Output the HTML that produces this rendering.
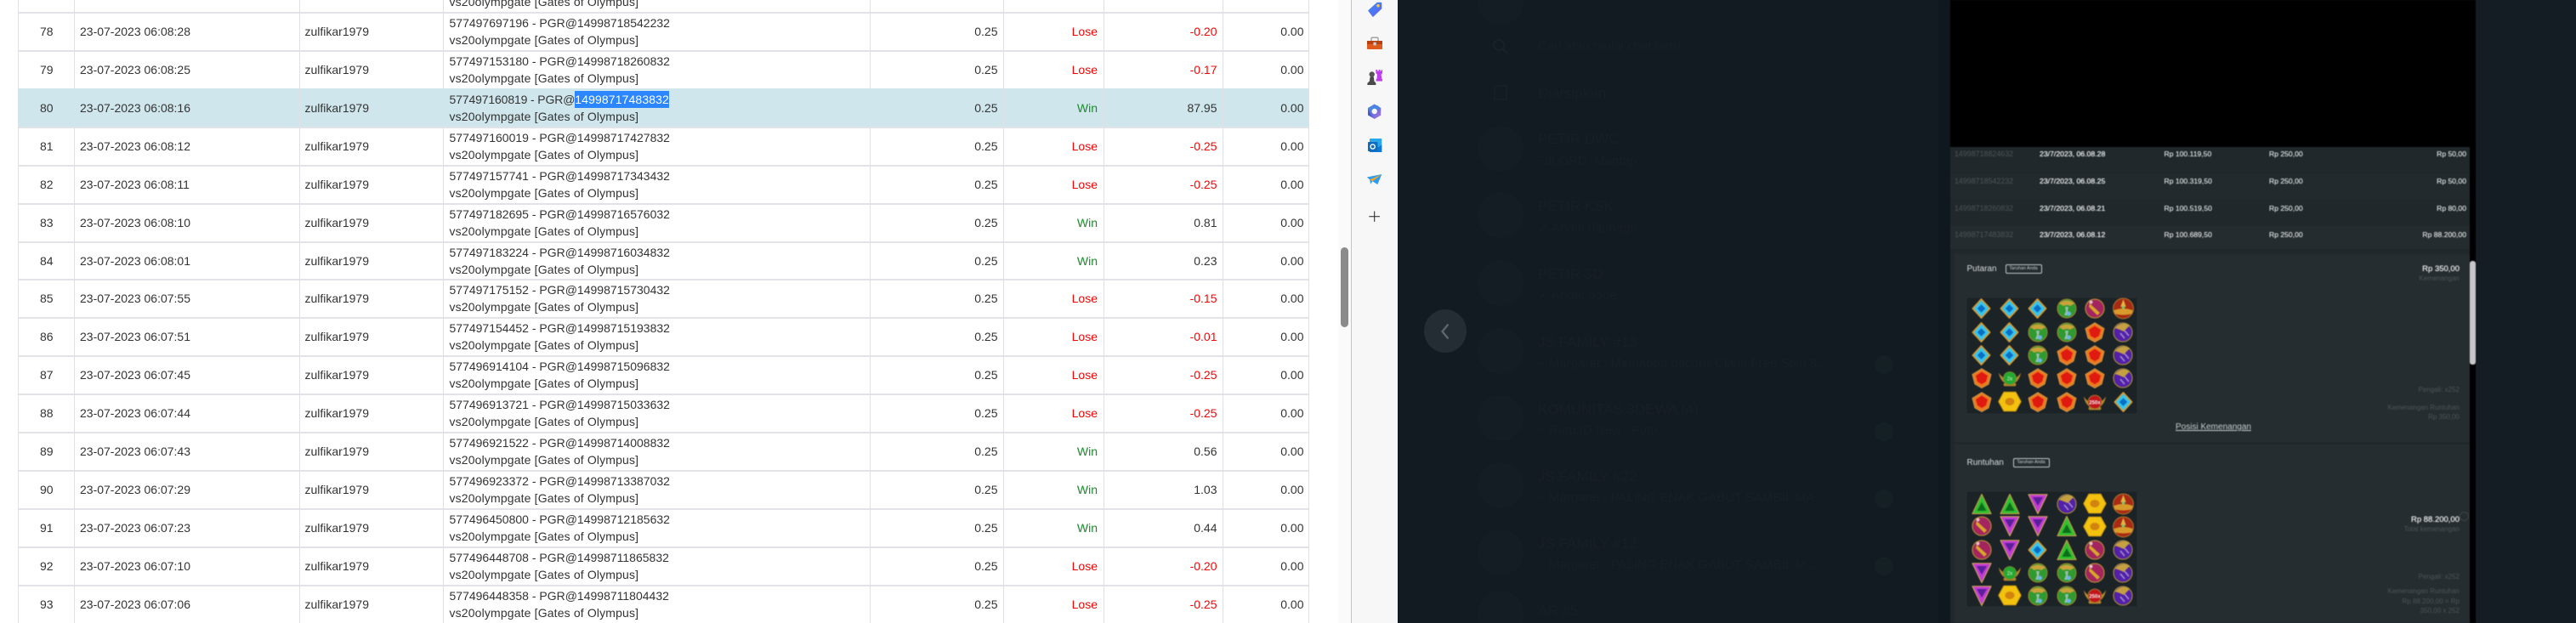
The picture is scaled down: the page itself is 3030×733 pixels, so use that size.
<!DOCTYPE html>
<html><head><meta charset="utf-8"><title>Report</title>
<style>
html,body{margin:0;padding:0;width:3030px;height:733px;overflow:hidden;background:#fff}
body{position:relative;font-family:"Liberation Sans",sans-serif}
.a{position:absolute}
.tb{position:absolute;left:0;top:0;width:1574px;height:733px;background:#fff;color:#333;font-size:14px;line-height:20px;overflow:hidden}
.r{position:absolute;left:21px;width:1519px;height:45px;border-top:2px solid #e1e3e8;box-sizing:border-box}
.r.s{background:#cfe6ec;border-top-color:#cfe6ec}
.r span{position:absolute;white-space:nowrap}
.n{left:26px;top:11px}.d{left:73px;top:11px}.u{left:337.5px;top:11px}
.t1{left:507.5px;top:1px}.t2{left:507.5px;top:21px;letter-spacing:.15px}
.b,.w,.p,.z{top:11px;text-align:right}
.b{right:366.5px}.w{right:249px}.p{right:108.5px}.z{right:6.5px}
.L{color:#f00}.W{color:#1c8a2c}
.v{position:absolute;top:0;width:1px;height:733px;background:#e0e1e6;z-index:3}
.sel{background:#2b86ff;color:#fff;display:inline-block;height:20px;letter-spacing:.12px}
.dk{position:absolute;left:1644px;top:0;width:1386px;height:733px;background:#131b22;overflow:hidden}
.f{position:absolute;white-space:nowrap;color:#171f26;font-size:17px;line-height:22px}
.f2{font-size:15px;color:#161f26}
.av{position:absolute;left:94px;width:54px;height:54px;border-radius:50%;background:#151d24}
.pn{position:absolute;left:2294px;top:0;width:618px;height:733px;background:#20282c;overflow:hidden;filter:blur(.5px)}
.pn span,.pn u{position:absolute;white-space:nowrap;line-height:12px}
.row{position:absolute;left:0;width:611px;height:29px;background:#222a2e}
.id{left:5px;color:#4d5457;font-size:8.9px}
.dt{left:105px;color:#eef0f0;font-size:8.7px;text-shadow:0 0 .6px #eef0f0}
.bl{left:251.5px;color:#d8dcdc;font-size:8.6px;text-shadow:0 0 .5px #d8dcdc}
.bt{left:375px;color:#d8dcdc;font-size:8.6px;text-shadow:0 0 .5px #d8dcdc}
.wn{right:11px;color:#d8dcdc;font-size:8.6px;text-shadow:0 0 .5px #d8dcdc}
.card{position:absolute;left:5px;width:606px;background:#262d31}
.h{color:#d8dcdc;font-size:10px;left:14.5px}
.bdg{position:absolute;width:43px;height:11px;border:1px solid #c6caca;border-radius:2px;box-sizing:border-box;color:#cfd3d3;font-size:5.4px;line-height:9px;text-align:center}
.gr{right:18px;color:#4c5356;font-size:8px;text-align:right}
.gw{right:18px;color:#e6e8e8;font-size:9.5px;text-align:right;text-shadow:0 0 .6px #e6e8e8}
.sv{filter:blur(.35px)}
</style></head><body>

<div class="tb">
<span class="a" style="left:528.5px;top:-8px;white-space:nowrap;letter-spacing:.15px">vs20olympgate [Gates of Olympus]</span>
<div class="v" style="left:21px"></div><div class="v" style="left:87px"></div><div class="v" style="left:352px"></div><div class="v" style="left:521px"></div><div class="v" style="left:1023px"></div><div class="v" style="left:1180px"></div><div class="v" style="left:1298px"></div><div class="v" style="left:1438px"></div><div class="v" style="left:1539px"></div>

<div class="r" style="top:14px"><span class="n">78</span><span class="d">23-07-2023 06:08:28</span><span class="u">zulfikar1979</span><span class="t1">577497697196 - PGR@14998718542232</span><span class="t2">vs20olympgate [Gates of Olympus]</span><span class="b">0.25</span><span class="w L">Lose</span><span class="p L">-0.20</span><span class="z">0.00</span></div>
<div class="r" style="top:59px"><span class="n">79</span><span class="d">23-07-2023 06:08:25</span><span class="u">zulfikar1979</span><span class="t1">577497153180 - PGR@14998718260832</span><span class="t2">vs20olympgate [Gates of Olympus]</span><span class="b">0.25</span><span class="w L">Lose</span><span class="p L">-0.17</span><span class="z">0.00</span></div>
<div class="r s" style="top:104px"><span class="n">80</span><span class="d">23-07-2023 06:08:16</span><span class="u">zulfikar1979</span><span class="t1" style="letter-spacing:-.14px">577497160819 - PGR@<b class="sel" style="font-weight:normal">14998717483832</b></span><span class="t2">vs20olympgate [Gates of Olympus]</span><span class="b">0.25</span><span class="w W">Win</span><span class="p">87.95</span><span class="z">0.00</span></div>
<div class="r" style="top:149px"><span class="n">81</span><span class="d">23-07-2023 06:08:12</span><span class="u">zulfikar1979</span><span class="t1">577497160019 - PGR@14998717427832</span><span class="t2">vs20olympgate [Gates of Olympus]</span><span class="b">0.25</span><span class="w L">Lose</span><span class="p L">-0.25</span><span class="z">0.00</span></div>
<div class="r" style="top:194px"><span class="n">82</span><span class="d">23-07-2023 06:08:11</span><span class="u">zulfikar1979</span><span class="t1">577497157741 - PGR@14998717343432</span><span class="t2">vs20olympgate [Gates of Olympus]</span><span class="b">0.25</span><span class="w L">Lose</span><span class="p L">-0.25</span><span class="z">0.00</span></div>
<div class="r" style="top:239px"><span class="n">83</span><span class="d">23-07-2023 06:08:10</span><span class="u">zulfikar1979</span><span class="t1">577497182695 - PGR@14998716576032</span><span class="t2">vs20olympgate [Gates of Olympus]</span><span class="b">0.25</span><span class="w W">Win</span><span class="p">0.81</span><span class="z">0.00</span></div>
<div class="r" style="top:284px"><span class="n">84</span><span class="d">23-07-2023 06:08:01</span><span class="u">zulfikar1979</span><span class="t1">577497183224 - PGR@14998716034832</span><span class="t2">vs20olympgate [Gates of Olympus]</span><span class="b">0.25</span><span class="w W">Win</span><span class="p">0.23</span><span class="z">0.00</span></div>
<div class="r" style="top:328px"><span class="n">85</span><span class="d">23-07-2023 06:07:55</span><span class="u">zulfikar1979</span><span class="t1">577497175152 - PGR@14998715730432</span><span class="t2">vs20olympgate [Gates of Olympus]</span><span class="b">0.25</span><span class="w L">Lose</span><span class="p L">-0.15</span><span class="z">0.00</span></div>
<div class="r" style="top:373px"><span class="n">86</span><span class="d">23-07-2023 06:07:51</span><span class="u">zulfikar1979</span><span class="t1">577497154452 - PGR@14998715193832</span><span class="t2">vs20olympgate [Gates of Olympus]</span><span class="b">0.25</span><span class="w L">Lose</span><span class="p L">-0.01</span><span class="z">0.00</span></div>
<div class="r" style="top:418px"><span class="n">87</span><span class="d">23-07-2023 06:07:45</span><span class="u">zulfikar1979</span><span class="t1">577496914104 - PGR@14998715096832</span><span class="t2">vs20olympgate [Gates of Olympus]</span><span class="b">0.25</span><span class="w L">Lose</span><span class="p L">-0.25</span><span class="z">0.00</span></div>
<div class="r" style="top:463px"><span class="n">88</span><span class="d">23-07-2023 06:07:44</span><span class="u">zulfikar1979</span><span class="t1">577496913721 - PGR@14998715033632</span><span class="t2">vs20olympgate [Gates of Olympus]</span><span class="b">0.25</span><span class="w L">Lose</span><span class="p L">-0.25</span><span class="z">0.00</span></div>
<div class="r" style="top:508px"><span class="n">89</span><span class="d">23-07-2023 06:07:43</span><span class="u">zulfikar1979</span><span class="t1">577496921522 - PGR@14998714008832</span><span class="t2">vs20olympgate [Gates of Olympus]</span><span class="b">0.25</span><span class="w W">Win</span><span class="p">0.56</span><span class="z">0.00</span></div>
<div class="r" style="top:553px"><span class="n">90</span><span class="d">23-07-2023 06:07:29</span><span class="u">zulfikar1979</span><span class="t1">577496923372 - PGR@14998713387032</span><span class="t2">vs20olympgate [Gates of Olympus]</span><span class="b">0.25</span><span class="w W">Win</span><span class="p">1.03</span><span class="z">0.00</span></div>
<div class="r" style="top:598px"><span class="n">91</span><span class="d">23-07-2023 06:07:23</span><span class="u">zulfikar1979</span><span class="t1">577496450800 - PGR@14998712185632</span><span class="t2">vs20olympgate [Gates of Olympus]</span><span class="b">0.25</span><span class="w W">Win</span><span class="p">0.44</span><span class="z">0.00</span></div>
<div class="r" style="top:643px"><span class="n">92</span><span class="d">23-07-2023 06:07:10</span><span class="u">zulfikar1979</span><span class="t1">577496448708 - PGR@14998711865832</span><span class="t2">vs20olympgate [Gates of Olympus]</span><span class="b">0.25</span><span class="w L">Lose</span><span class="p L">-0.20</span><span class="z">0.00</span></div>
<div class="r" style="top:688px"><span class="n">93</span><span class="d">23-07-2023 06:07:06</span><span class="u">zulfikar1979</span><span class="t1">577496448358 - PGR@14998711804432</span><span class="t2">vs20olympgate [Gates of Olympus]</span><span class="b">0.25</span><span class="w L">Lose</span><span class="p L">-0.25</span><span class="z">0.00</span></div>
</div>

<!-- page scrollbar -->
<div class="a" style="left:1574px;top:0;width:15px;height:733px;background:#fafafa"></div>
<div class="a" style="left:1589px;top:0;width:1px;height:733px;background:#c4c4c4"></div>
<div class="a" style="left:1577px;top:291px;width:9px;height:94px;background:#8b8b8b;border-radius:5px"></div>

<!-- sidebar -->
<div class="a" style="left:1590px;top:0;width:54px;height:733px;background:#f7f7f7"></div>
<svg class="a" style="left:1590px;top:0" width="54" height="270" viewBox="0 0 54 270">
<defs>
<linearGradient id="tg" x1="0" y1="0" x2="1" y2="1"><stop offset="0" stop-color="#3f8cf5"/><stop offset="1" stop-color="#5f5ff0"/></linearGradient>
<linearGradient id="ms" x1="0" y1="0" x2="1" y2="1"><stop offset="0" stop-color="#2f9be6"/><stop offset=".5" stop-color="#6a6bd8"/><stop offset="1" stop-color="#b07ae0"/></linearGradient>
</defs>
<path d="M20 12.5 30 3.5h4.5V10L25 19z" fill="url(#tg)" stroke="url(#tg)" stroke-width="1.5" stroke-linejoin="round"/>
<circle cx="31" cy="6.7" r="1.8" fill="#f5c93a"/>
<path d="M23 48v-2.4q0-1.4 1.4-1.4h5.2q1.4 0 1.4 1.4V48" fill="none" stroke="#9a9a9a" stroke-width="1.3"/>
<rect x="18" y="48" width="18" height="4.5" fill="#b8420f"/>
<rect x="18" y="52" width="18" height="6" rx="1" fill="#df5a1d"/>
<rect x="25.4" y="49.8" width="3.4" height="3.6" rx=".6" fill="#cfcfcf"/>
<circle cx="23.7" cy="87.5" r="3.2" fill="#555"/>
<path d="M21.5 90.5h4.4l.5 5 2 2.2V100H18.4v-2.3l2.5-2.2z" fill="#4a4a4a"/>
<path d="M28.3 82h1.9v1.6h1.5V82h1.9v1.6h1.3V82H36v4.3l-1.4 1.2.6 5 .8 1v2h-7.4v-2l.9-1 .5-5-1.5-1.2z" fill="#c13df2"/>
<path d="M26.7 122.5 34.3 127v8.6L26.7 140 19 135.6V127z" fill="url(#ms)"/>
<path d="M21.5 128.5l9-4.5 3 3-5 2.5z" fill="#3a8ee6" opacity=".8"/>
<path d="M19.3 128l3 7.5 3 2.5-6-3z" fill="#3d55c4"/>
<circle cx="26.7" cy="131" r="3.2" fill="#f7f7f7"/>
<rect x="21" y="163" width="14.3" height="16" rx=".8" fill="#28a8ea"/>
<path d="M21 171l7 4 7.3-4.5V179H21z" fill="#0f78d4"/>
<rect x="19" y="167" width="11.5" height="11" rx=".8" fill="#0f6cbd"/>
<circle cx="24.7" cy="172.5" r="2.6" fill="none" stroke="#fff" stroke-width="1.4"/>
<path d="M17.8 208.5 35.3 205l-5 12-6-3.8-2.2 3.5-1-5.5z" fill="#2f9bee"/>
<path d="M21 211.5 35 205.2l-10.5 8z" fill="#f4a723"/>
<path d="M20.3 254.7H33M26.7 248.5v12.4" stroke="#222" stroke-width="1" fill="none"/>
</svg>

<!-- dimmed chat list -->
<div class="dk">
<div class="av" style="top:-25px"></div>
<svg class="a" style="left:110px;top:44px" width="22" height="22" viewBox="0 0 22 22"><circle cx="9" cy="9" r="6" fill="none" stroke="#182128" stroke-width="2"/><path d="M13.5 13.5 19 19" stroke="#182128" stroke-width="2"/></svg>
<span class="f f2" style="left:165px;top:44px">Cari atau mulai chat baru</span>
<div class="a" style="left:113px;top:100px;width:16px;height:18px;border:2px solid #151f26;box-sizing:border-box"></div>
<span class="f" style="left:165px;top:99px">Diarsipkan</span>
<div class="av" style="top:148px"></div><span class="f" style="left:165px;top:153px">PETIR DWC</span><span class="f f2" style="left:165px;top:179px">~JLORD: Mantap</span>
<div class="av" style="top:226px"></div><span class="f" style="left:165px;top:232px">PETIR KSK</span><span class="f f2" style="left:165px;top:258px">✓ Anda: ditunggu</span>
<div class="av" style="top:306px"></div><span class="f" style="left:165px;top:312px">PETIR 3D</span><span class="f f2" style="left:165px;top:337px">✓ Anda: done</span>
<div class="av" style="top:386px"></div><span class="f" style="left:165px;top:392px">JS FAMILY #13</span><span class="f f2" style="left:165px;top:417px">~ Margaret : Mantappp gacorrr Claim Free Spin 8...</span>
<div class="av" style="top:465px"></div><span class="f" style="left:165px;top:471px">KOMUNITAS 3DEWA (4)</span><span class="f f2" style="left:165px;top:496px">~ Ratu3D New : Foto</span>
<div class="av" style="top:544px"></div><span class="f" style="left:165px;top:550px">JS FAMILY #22</span><span class="f f2" style="left:165px;top:575px">~ Margaret : PALING ENAK GABUT SAMBIL MA...</span>
<div class="av" style="top:623px"></div><span class="f" style="left:165px;top:629px">JS FAMILY #12</span><span class="f f2" style="left:165px;top:654px">~ Margaret : PALING ENAK GABUT SAMBIL M...</span>
<div class="av" style="top:695px"></div><span class="f" style="left:165px;top:708px">AR #5</span>
<div class="a" style="left:561px;top:418px;width:22px;height:22px;border-radius:50%;background:#152025"></div>
<div class="a" style="left:561px;top:497px;width:22px;height:22px;border-radius:50%;background:#152025"></div>
<div class="a" style="left:561px;top:576px;width:22px;height:22px;border-radius:50%;background:#152025"></div>
<div class="a" style="left:561px;top:655px;width:22px;height:22px;border-radius:50%;background:#152025"></div>
<div class="a" style="left:31px;top:364px;width:50px;height:51px;border-radius:50%;background:#242d33"></div>
<svg class="a" style="left:44px;top:378px" width="24" height="24" viewBox="0 0 24 24"><path d="M15.5 3.5 8.5 12l7 8.5" fill="none" stroke="#5b656d" stroke-width="2.4"/></svg>
<div class="a" style="left:636px;top:0;width:14px;height:733px;background:#10181f"></div>
<div class="a" style="left:1268px;top:0;width:118px;height:733px;background:#141d24"></div>
</div>

<!-- panel -->
<div class="pn">
<div class="a" style="left:0;top:0;width:618px;height:173px;background:#000"></div>
<div class="a" style="left:611px;top:173px;width:7px;height:560px;background:#000"></div>
<div class="a" style="left:611px;top:307px;width:7px;height:122px;background:#c6c6c6;border-radius:3px"></div>
<div class="row" style="top:173px;height:30px;background:#20282c"></div>
<div class="row" style="top:204px;height:30px;background:#222a2e"></div>
<div class="row" style="top:235px;height:30px;background:#20282c"></div>
<div class="row" style="top:266px;height:27px;background:#252c30"></div>

<span class="id" style="top:175px">14998718824632</span><span class="dt" style="top:175px">23/7/2023, 06.08.28</span><span class="bl" style="top:175px">Rp 100.119,50</span><span class="bt" style="top:175px">Rp 250,00</span><span class="wn" style="top:175px">Rp 50,00</span>
<span class="id" style="top:207px">14998718542232</span><span class="dt" style="top:207px">23/7/2023, 06.08.25</span><span class="bl" style="top:207px">Rp 100.319,50</span><span class="bt" style="top:207px">Rp 250,00</span><span class="wn" style="top:207px">Rp 50,00</span>
<span class="id" style="top:239px">14998718260832</span><span class="dt" style="top:239px">23/7/2023, 06.08.21</span><span class="bl" style="top:239px">Rp 100.519,50</span><span class="bt" style="top:239px">Rp 250,00</span><span class="wn" style="top:239px">Rp 80,00</span>
<span class="id" style="top:270px">14998717483832</span><span class="dt" style="top:270px">23/7/2023, 06.08.12</span><span class="bl" style="top:270px">Rp 100.689,50</span><span class="bt" style="top:270px">Rp 250,00</span><span class="wn" style="top:270px">Rp 88.200,00</span>

<div class="card" style="top:299px;height:221px"></div>
<div class="card" style="top:523px;height:210px"></div>

<span class="h" style="left:19.5px;top:311px">Putaran</span>
<div class="bdg" style="left:64.5px;top:311px">Taruhan Anda</div>
<span class="gw" style="top:311px;right:19px">Rp 350,00</span>
<span class="gr" style="top:322px;right:19px">Kemenangan</span>
<span class="gr" style="top:453px;right:19px">Pengali: x252</span>
<span class="gr" style="top:474px;right:19px">Kemenangan Runtuhan</span>
<span class="gr" style="top:485px;right:19px">Rp 350,00</span>
<u style="left:265px;top:497px;color:#c8cccc;font-size:10px">Posisi Kemenangan</u>

<span class="h" style="left:19.5px;top:539px">Runtuhan</span>
<div class="bdg" style="left:73.5px;top:539px">Taruhan Anda</div>
<span class="gw" style="top:606px;right:19px">Rp 88.200,00</span>
<span class="gr" style="top:617px;right:19px">Total kemenangan</span>
<span class="gr" style="top:673px;right:19px">Pengali: x252</span>
<span class="gr" style="top:690px;right:19px">Kemenangan Runtuhan</span>
<span class="gr" style="top:702px;right:19px">Rp 88.200,00 = Rp</span>
<span class="gr" style="top:713px;right:19px">350,00 x 252</span>
<div class="a" style="left:599px;top:602px;width:9px;height:9px;border:1px solid #3d4548;border-radius:50%"></div>

<svg class="a sv" style="left:0;top:0" width="618" height="733" viewBox="2294 0 618 733">
<defs>
<symbol id="sb" viewBox="0 0 24 24"><path d="M12 .5 22.5 12 12 23.5 1.5 12z" fill="#35c5f0" stroke="#dc9a2c" stroke-width="1.8" stroke-linejoin="round"/><path d="M12 7 17 12 12 17 7 12z" fill="#0a6fc4"/></symbol>
<symbol id="sh" viewBox="0 0 24 24"><circle cx="12" cy="12" r="11" fill="#2f9a2f" stroke="#a8872c" stroke-width="1"/><path d="M3 6Q12-1 21 6L16 9Q12 7 8 9z" fill="#c9a23a"/><path d="M10 10h4l-1 5 2 5H9l2-5z" fill="#9dbfb0"/><circle cx="14.5" cy="18" r="2.6" fill="#6fb4e6"/></symbol>
<symbol id="sm" viewBox="0 0 24 24"><circle cx="12" cy="12" r="11" fill="#a3245e" stroke="#b48a34" stroke-width="1.2"/><path d="M6 6 18 17 15 20 5 10z" fill="#d8a72a"/><circle cx="7.5" cy="4.5" r="2" fill="#e0c0c8"/></symbol>
<symbol id="sc" viewBox="0 0 24 24"><circle cx="12" cy="12" r="11" fill="#a82a14" stroke="#a9742a" stroke-width="1"/><path d="M1.5 14Q12 10 22.5 14L21 18Q12 20 3 18z" fill="#d89a2a"/><path d="M12 2 15 10H9z" fill="#e0b640"/><circle cx="12" cy="11" r="1.6" fill="#7acb6a"/></symbol>
<symbol id="sr" viewBox="0 0 24 24"><path d="M12 .8 23 7.500 20 19 12 23.500 4 19 1 7.500z" fill="#ea7a20" stroke="#cf9a48" stroke-width="1" stroke-linejoin="round"/><path d="M12 4.500 19 9 17 16 12 19 7 16 5 9z" fill="#e01a10"/></symbol>
<symbol id="sp" viewBox="0 0 24 24"><circle cx="12" cy="12" r="11" fill="#5221a8" stroke="#a2883a" stroke-width="1.2"/><path d="M2.500 7Q11-2 20 4L13 11Q7 8 2.500 7z" fill="#c4a040"/><path d="M9 13l5 6M14 10l5 6" stroke="#a48fd0" stroke-width="1.6"/></symbol>
<symbol id="sy" viewBox="0 0 28 24"><path d="M7 .8h14L27.200 12 21 23.200H7L.8 12z" fill="#f2c20e" stroke="#d49a10" stroke-width="1"/><ellipse cx="14" cy="12" rx="5.500" ry="4.500" fill="#d2840e"/></symbol>
<symbol id="sg" viewBox="0 0 24 24"><path d="M12 .5 23 23.500H1z" fill="#2fc12f" stroke="#c49c48" stroke-width="1.200" stroke-linejoin="round"/><path d="M12 10 17.500 20H6.500z" fill="#0c6d1a"/></symbol>
<symbol id="sv" viewBox="0 0 24 24"><path d="M1 .8H23L12 23.500z" fill="#c43bd6" stroke="#cfa25a" stroke-width="1.200" stroke-linejoin="round"/><path d="M6 4H18L12 14z" fill="#5c1f9a"/></symbol>
<symbol id="sG" viewBox="0 0 30 24"><path d="M1 5Q5 11 9 12L9 18Q3 15 1 5zM29 5Q25 11 21 12L21 18Q27 15 29 5z" fill="#b58a2c"/><rect x="7" y="18" width="16" height="4" rx="2" fill="#b08428"/><circle cx="15" cy="12" r="8" fill="#23a92f" stroke="#7a8f2c"/><text x="15" y="14.500" font-size="6.500" fill="#eee" text-anchor="middle" font-family="Liberation Sans">2x</text></symbol>
<symbol id="sR" viewBox="0 0 30 24"><path d="M1 5Q5 11 9 12L9 18Q3 15 1 5zM29 5Q25 11 21 12L21 18Q27 15 29 5z" fill="#b58a2c"/><rect x="7" y="18" width="16" height="4" rx="2" fill="#b08428"/><circle cx="15" cy="12" r="8.500" fill="#c3161c" stroke="#a8822a"/><text x="15" y="14.500" font-size="6.500" fill="#f2f2f2" text-anchor="middle" font-family="Liberation Sans" font-weight="bold">250x</text></symbol>
</defs>
<rect x="2313" y="350" width="201" height="137" fill="#1b2327" stroke="#2c3438" stroke-width=".6"/>
<rect x="2313" y="578" width="201" height="136" fill="#1b2327" stroke="#2c3438" stroke-width=".6"/>
<!-- grid 1 -->
<use href="#sb" x="2319" y="351" width="23" height="24"/><use href="#sb" x="2352" y="351" width="23" height="24"/><use href="#sb" x="2385" y="351" width="23" height="24"/><use href="#sh" x="2419" y="351" width="24" height="24"/><use href="#sm" x="2452" y="351" width="24" height="24"/><use href="#sc" x="2484" y="350" width="27" height="26"/>
<use href="#sb" x="2319" y="379" width="23" height="24"/><use href="#sb" x="2352" y="379" width="23" height="24"/><use href="#sh" x="2385" y="379" width="24" height="24"/><use href="#sh" x="2419" y="379" width="24" height="24"/><use href="#sr" x="2452" y="379" width="24" height="24"/><use href="#sp" x="2485" y="379" width="24" height="24"/>
<use href="#sb" x="2319" y="406" width="23" height="24"/><use href="#sb" x="2352" y="406" width="23" height="24"/><use href="#sh" x="2385" y="406" width="24" height="24"/><use href="#sr" x="2419" y="406" width="24" height="24"/><use href="#sr" x="2452" y="406" width="24" height="24"/><use href="#sp" x="2485" y="406" width="24" height="24"/>
<use href="#sr" x="2319" y="433" width="24" height="24"/><use href="#sG" x="2350" y="433" width="28" height="24"/><use href="#sr" x="2385" y="433" width="24" height="24"/><use href="#sr" x="2419" y="433" width="24" height="24"/><use href="#sr" x="2452" y="433" width="24" height="24"/><use href="#sp" x="2485" y="433" width="24" height="24"/>
<use href="#sr" x="2319" y="461" width="24" height="24"/><use href="#sy" x="2350" y="460" width="28" height="25"/><use href="#sr" x="2385" y="461" width="24" height="24"/><use href="#sr" x="2419" y="461" width="24" height="24"/><use href="#sR" x="2450" y="461" width="28" height="24"/><use href="#sb" x="2486" y="461" width="23" height="24"/>
<!-- grid 2 -->
<use href="#sg" x="2319" y="581" width="24" height="24"/><use href="#sg" x="2352" y="581" width="24" height="24"/><use href="#sv" x="2385" y="581" width="24" height="24"/><use href="#sp" x="2419" y="581" width="24" height="24"/><use href="#sy" x="2450" y="580" width="28" height="25"/><use href="#sc" x="2484" y="580" width="27" height="26"/>
<use href="#sm" x="2319" y="607" width="24" height="24"/><use href="#sv" x="2352" y="607" width="24" height="24"/><use href="#sv" x="2385" y="607" width="24" height="24"/><use href="#sg" x="2419" y="607" width="24" height="24"/><use href="#sy" x="2450" y="607" width="28" height="25"/><use href="#sc" x="2484" y="607" width="27" height="26"/>
<use href="#sm" x="2319" y="635" width="24" height="24"/><use href="#sv" x="2352" y="635" width="24" height="24"/><use href="#sb" x="2385" y="635" width="23" height="24"/><use href="#sg" x="2419" y="635" width="24" height="24"/><use href="#sm" x="2452" y="635" width="24" height="24"/><use href="#sp" x="2485" y="635" width="24" height="24"/>
<use href="#sv" x="2319" y="662" width="24" height="24"/><use href="#sG" x="2350" y="662" width="28" height="24"/><use href="#sh" x="2385" y="662" width="24" height="24"/><use href="#sh" x="2419" y="662" width="24" height="24"/><use href="#sm" x="2452" y="662" width="24" height="24"/><use href="#sp" x="2485" y="662" width="24" height="24"/>
<use href="#sv" x="2319" y="689" width="24" height="24"/><use href="#sy" x="2350" y="688" width="28" height="25"/><use href="#sh" x="2385" y="689" width="24" height="24"/><use href="#sh" x="2419" y="689" width="24" height="24"/><use href="#sR" x="2450" y="689" width="28" height="24"/><use href="#sp" x="2485" y="689" width="24" height="24"/>
</svg>
</div>
</body></html>
